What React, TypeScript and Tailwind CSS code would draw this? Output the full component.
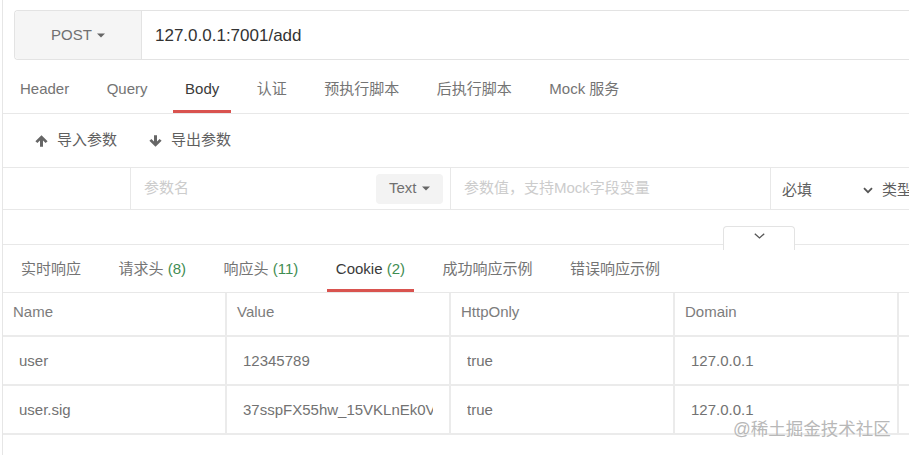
import React from "react";

const reqTabs = ["Header", "Query", "Body", "认证", "预执行脚本", "后执行脚本", "Mock 服务"];

const resTabs: { label: string; count?: string }[] = [
  { label: "实时响应" },
  { label: "请求头", count: "(8)" },
  { label: "响应头", count: "(11)" },
  { label: "Cookie", count: "(2)" },
  { label: "成功响应示例" },
  { label: "错误响应示例" },
];

const cookies = [
  { name: "user", value: "12345789", httpOnly: "true", domain: "127.0.0.1" },
  { name: "user.sig", value: "37sspFX55hw_15VKLnEk0VmQ7tRz", httpOnly: "true", domain: "127.0.0.1" },
];

function Caret() {
  return (
    <svg width="8" height="5" viewBox="0 0 8 5" className="shrink-0">
      <path d="M0 0.5h8L4 4.5z" fill="#666" />
    </svg>
  );
}

function Arrow({ down }: { down?: boolean }) {
  return (
    <svg width="13" height="12" viewBox="0 0 13 12" className={down ? "rotate-180" : ""}>
      <path d="M6.5 0.3L12.6 6.2L10.6 8.1L8 5.6V11.7H5V5.6L2.4 8.1L0.4 6.2Z" fill="#666" />
    </svg>
  );
}

export default function App() {
  return (
    <div className="w-[909px] h-[455px] overflow-hidden bg-white relative font-['Liberation_Sans','Noto_Sans_CJK_SC',sans-serif]">
      <div className="ml-[2px] h-full border-l border-[#e6e6e6] flex flex-col">
        {/* url bar */}
        <div className="ml-[11px] mt-[10px] h-[50px] flex border border-r-0 border-[#e3e3e3] rounded-l-[4px]">
          <div className="w-[127px] shrink-0 bg-[#f5f5f5] border-r border-[#e3e3e3] rounded-l-[4px] flex items-center justify-center gap-[5px] pt-[1px] text-[15px] text-[#707070]">
            POST
            <Caret />
          </div>
          <div className="flex items-center pl-[13px] pt-[2px] text-[17px] text-[#333]">127.0.0.1:7001/add</div>
        </div>

        {/* request tabs */}
        <div className="mt-[8px] flex pl-[5px] gap-[13.5px] border-b border-[#e8e8e8]">
          {reqTabs.map((t) => (
            <div
              key={t}
              className={`px-3 pt-[11px] pb-[11px] leading-[20px] text-[15px] border-b-[3px] ${
                t === "Body" ? "border-[#d9534f] text-[#3a3a3a]" : "border-transparent text-[#747474]"
              }`}
            >
              {t}
            </div>
          ))}
        </div>

        {/* import / export */}
        <div className="h-[53px] flex items-center pl-[32px] text-[15px] text-[#5f5f5f]">
          <div className="flex items-center gap-[9px]">
            <Arrow />
            导入参数
          </div>
          <div className="flex items-center gap-[9px] ml-[32px]">
            <Arrow down />
            导出参数
          </div>
        </div>

        {/* param row */}
        <div className="h-[43px] flex border-y border-[#e8e8e8] text-[15px]">
          <div className="w-[128px] shrink-0 border-r border-[#e8e8e8]" />
          <div className="w-[320px] shrink-0 border-r border-[#e8e8e8] flex items-center pl-[13px] pr-[7px]">
            <span className="text-[#cccccc]">参数名</span>
            <div className="ml-auto w-[67px] h-[30px] rounded-[4px] bg-[#f3f3f3] flex items-center gap-[5px] pl-[13px] text-[#707070]">
              Text
              <Caret />
            </div>
          </div>
          <div className="w-[320px] shrink-0 border-r border-[#e8e8e8] flex items-center pl-[13px] text-[#cccccc]">
            参数值，支持Mock字段变量
          </div>
          <div className="flex items-center pl-[11px] pt-[3px] text-[#5f5f5f] whitespace-nowrap">
            <span className="w-[81px]">必填</span>
            <svg width="10" height="7" viewBox="0 0 10 7">
              <path d="M1 1.2L5 5.2L9 1.2" fill="none" stroke="#555" strokeWidth="1.8" />
            </svg>
            <span className="ml-[9px]">类型</span>
          </div>
        </div>

        <div className="h-[34px]" />

        {/* response tabs */}
        <div className="relative border-t border-[#e8e8e8]">
          <div className="absolute left-[720px] top-[-19px] w-[72px] h-[24px] bg-white border border-b-0 border-[#e3e3e3] rounded-t-[4px] flex justify-center pt-[6px]">
            <svg width="11" height="6" viewBox="0 0 11 6">
              <path d="M0.8 0.8L5.5 5L10.2 0.8" fill="none" stroke="#555" strokeWidth="1.3" />
            </svg>
          </div>
          <div className="flex pl-[9px] gap-[19.5px] border-b border-[#e8e8e8]">
            {resTabs.map((t) => (
              <div
                key={t.label}
                className={`px-[9px] pt-[14px] pb-[10px] leading-[20px] text-[15px] whitespace-nowrap border-b-[3px] ${
                  t.label === "Cookie" ? "border-[#d9534f] text-[#3a3a3a]" : "border-transparent text-[#747474]"
                }`}
              >
                {t.label}
                {t.count && <span className="text-[#3f8d52]"> {t.count}</span>}
              </div>
            ))}
          </div>
        </div>

        {/* cookie table */}
        <div className="text-[15px]">
          <div className="flex h-[44px] border-b-2 border-[#ebebeb] text-[#7c7c7c]">
            {["Name", "Value", "HttpOnly", "Domain"].map((h) => (
              <div key={h} className="w-[224px] shrink-0 border-r-2 border-[#ebebeb] flex items-center pl-[10px] pb-[3px]">
                {h}
              </div>
            ))}
            <div className="flex-1" />
          </div>
          {cookies.map((c) => (
            <div key={c.name} className="flex h-[49px] border-b-2 border-[#ebebeb] text-[#727272]">
              {[c.name, c.value, c.httpOnly, c.domain].map((v, i) => (
                <div key={i} className="w-[224px] shrink-0 border-r-2 border-[#ebebeb] flex items-center pl-[16px] pr-[16px] pt-[1px]">
                  <div className="w-full overflow-hidden whitespace-nowrap">{v}</div>
                </div>
              ))}
              <div className="flex-1" />
            </div>
          ))}
        </div>
      </div>

      <div className="absolute left-[733px] top-[419px] text-[17.5px] leading-[21px] text-[#b8b8b8] whitespace-nowrap">
        @稀土掘金技术社区
      </div>
    </div>
  );
}
